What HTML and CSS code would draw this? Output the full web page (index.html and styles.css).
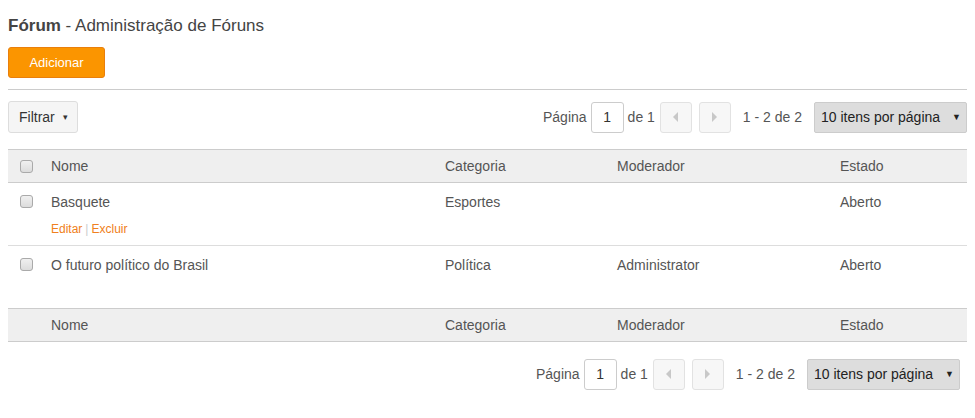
FILE: index.html
```html
<!DOCTYPE html>
<html lang="pt">
<head>
    <meta charset="UTF-8">
    <title>Fórum - Administração de Fóruns</title>
    <link rel="stylesheet" href="styles.css">
</head>
<body>
<div class="page">
    <h1 class="title"><b>Fórum</b> - Administração de Fóruns</h1>
    <button type="button" class="btn_add">Adicionar</button>
    <div class="sep"></div>

    <div class="toolbar">
        <button type="button" class="btn_filter">Filtrar <span class="caret">&#9662;</span></button>
        <div class="pager">
            <span>Página</span>
            <input type="text" class="pg_input" value="1">
            <span>de 1</span>
            <button type="button" class="pg_btn"><span class="tri_left"></span></button>
            <button type="button" class="pg_btn"><span class="tri_right"></span></button>
            <span class="pg_count">1 - 2 de 2</span>
            <div class="pg_select">10 itens por página <span class="caret">&#9660;</span></div>
        </div>
    </div>

    <table class="grid" cellspacing="0" cellpadding="0">
        <colgroup>
            <col style="width:33px"><col style="width:394px"><col style="width:172px"><col style="width:223px"><col>
        </colgroup>
        <thead>
        <tr>
            <th class="chk"><input type="checkbox"></th>
            <th>Nome</th><th>Categoria</th><th>Moderador</th><th>Estado</th>
        </tr>
        </thead>
        <tbody>
        <tr>
            <td class="chk"><input type="checkbox"></td>
            <td>Basquete
                <div class="actions"><a href="#">Editar</a><span class="bar">|</span><a href="#">Excluir</a></div>
            </td>
            <td>Esportes</td><td></td><td>Aberto</td>
        </tr>
        <tr>
            <td class="chk"><input type="checkbox"></td>
            <td>O futuro político do Brasil</td>
            <td>Política</td><td>Administrator</td><td>Aberto</td>
        </tr>
        </tbody>
        <tfoot>
        <tr>
            <th class="chk"></th>
            <th>Nome</th><th>Categoria</th><th>Moderador</th><th>Estado</th>
        </tr>
        </tfoot>
    </table>

    <div class="toolbar bottom">
        <div class="pager">
            <span>Página</span>
            <input type="text" class="pg_input" value="1">
            <span>de 1</span>
            <button type="button" class="pg_btn"><span class="tri_left"></span></button>
            <button type="button" class="pg_btn"><span class="tri_right"></span></button>
            <span class="pg_count">1 - 2 de 2</span>
            <div class="pg_select">10 itens por página <span class="caret">&#9660;</span></div>
        </div>
    </div>
</div>
</body>
</html>
```

FILE: styles.css
```css
html,body{
    margin: 0;
    padding: 0;
}
body{
    font-family: "Liberation Sans", Arial, sans-serif;
    font-size: 14px;
    color: #555;
    background: #fff;
}
.page{
    padding: 0 8px;
}
.title{
    margin: 0;
    padding-top: 16px;
    height: 34px;
    box-sizing: border-box;
    font-size: 17px;
    font-weight: normal;
    color: #444;
}
.title b{
    font-weight: bold;
}
.btn_add{
    box-sizing: border-box;
    width: 97px;
    height: 31px;
    margin-top: 13px;
    background: #fb9500;
    border: 1px solid #e97f0c;
    border-radius: 3px;
    color: #fff;
    font-family: inherit;
    font-size: 13px;
    cursor: pointer;
}
.sep{
    margin-top: 11px;
    border-top: 1px solid #ccc;
}
.toolbar{
    display: flex;
    align-items: center;
    justify-content: space-between;
    margin-top: 11px;
    height: 32px;
}
.toolbar.bottom{
    justify-content: flex-end;
    margin-top: 16px;
    padding-right: 7px;
}
.btn_filter{
    box-sizing: border-box;
    height: 32px;
    width: 70px;
    background: #f5f5f5;
    border: 1px solid #ddd;
    border-radius: 3px;
    font-family: inherit;
    font-size: 14px;
    color: #333;
    padding: 0 0 0 10px;
    text-align: left;
}
.btn_filter .caret{
    font-size: 9px;
    margin-left: 4px;
    vertical-align: 2px;
}
.pager{
    display: flex;
    align-items: center;
    color: #555;
}
.pg_input{
    box-sizing: border-box;
    width: 33px;
    height: 31px;
    margin: 0 4px;
    border: 1px solid #ccc;
    border-radius: 3px;
    text-align: center;
    font-family: inherit;
    font-size: 14px;
    color: #333;
}
.pg_btn{
    box-sizing: border-box;
    width: 32px;
    height: 31px;
    margin-left: 5px;
    background: #f7f7f7;
    border: 1px solid #e2e2e2;
    border-radius: 3px;
    display: flex;
    align-items: center;
    justify-content: center;
    padding: 0;
}
.pg_btn + .pg_btn{
    margin-left: 7px;
}
.tri_left{
    width: 0;
    height: 0;
    border-top: 5px solid transparent;
    border-bottom: 5px solid transparent;
    border-right: 5px solid #c8c8c8;
}
.tri_right{
    width: 0;
    height: 0;
    border-top: 5px solid transparent;
    border-bottom: 5px solid transparent;
    border-left: 5px solid #c8c8c8;
}
.pg_count{
    margin-left: 12px;
}
.pg_select{
    box-sizing: border-box;
    width: 153px;
    height: 31px;
    margin-left: 12px;
    background: #ddd;
    border: 1px solid #ccc;
    border-radius: 2px;
    color: #222;
    display: flex;
    align-items: center;
    justify-content: space-between;
    padding: 0 5px 0 6px;
}
.pg_select .caret{
    font-size: 9px;
}
.grid{
    width: 100%;
    table-layout: fixed;
    border-collapse: collapse;
    margin-top: 16px;
}
.grid th{
    background: #efefef;
    font-weight: normal;
    text-align: left;
    height: 32px;
    padding: 0 10px;
    border-top: 1px solid #ccc;
    border-bottom: 1px solid #ccc;
    color: #555;
}
.grid td{
    height: 63px;
    vertical-align: top;
    padding: 11px 10px 0;
    box-sizing: border-box;
    border-bottom: 1px solid #ddd;
}
.grid tbody tr:last-child td{
    border-bottom: none;
}
.grid .chk{
    padding: 0 0 0 12px;
}
.grid td.chk{
    padding-top: 12px;
}
.grid input[type=checkbox]{
    -webkit-appearance: none;
    appearance: none;
    box-sizing: border-box;
    width: 13px;
    height: 13px;
    margin: 0;
    display: block;
    border: 1px solid #aaa;
    border-radius: 3px;
    background: linear-gradient(#f0f0f0, #dcdcdc);
}
.actions{
    margin-top: 12px;
    font-size: 12px;
}
.actions a{
    color: #f08020;
    text-decoration: none;
}
.actions .bar{
    color: #ccc;
    margin: 0 3px;
}
```
